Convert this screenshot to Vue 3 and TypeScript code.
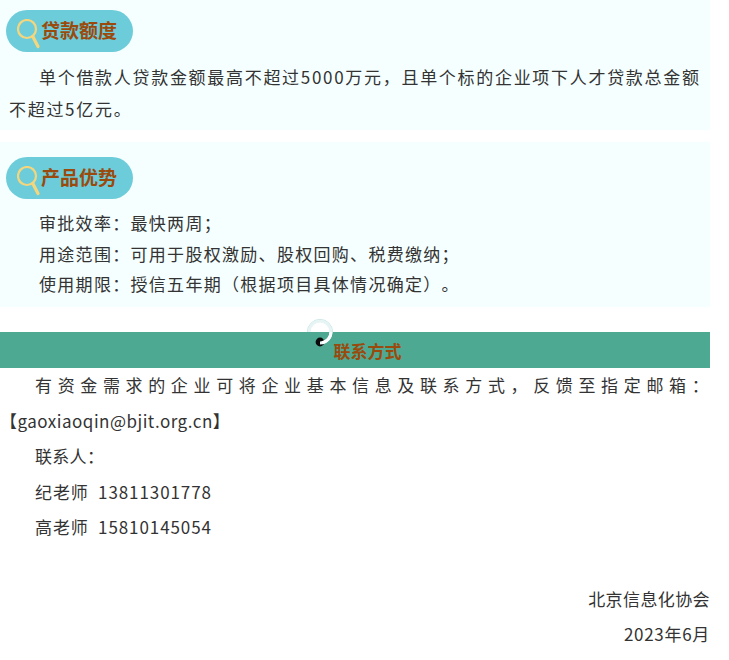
<script setup lang="ts">
interface Section { title: string }
const terms: [string, string][] = [
  ['审批效率：', '最快两周；'],
  ['用途范围：', '可用于股权激励、股权回购、税费缴纳；'],
  ['使用期限：', '授信五年期（根据项目具体情况确定）。'],
]
const contacts: { name: string; phone: string }[] = [
  { name: '纪老师', phone: '13811301778' },
  { name: '高老师', phone: '15810145054' },
]
const first: Section = { title: '贷款额度' }
const second: Section = { title: '产品优势' }
</script>

<template>
  <main class="page">
    <section class="card card-one">
      <h2 class="pill">
        <svg class="lens" viewBox="0 0 26 32" width="26" height="32" aria-hidden="true">
          <circle cx="10" cy="10" r="9" fill="none" stroke="#f5d67c" stroke-width="2.2" />
          <path d="M15.8 17.5 L21 27.5" stroke="#f5d67c" stroke-width="3.2" stroke-linecap="round" />
        </svg>
        <span class="pill-text">{{ first.title }}</span>
      </h2>
      <p class="para">单个借款人贷款金额最高不超过5000万元，且单个标的企业项下人才贷款总金额不超过5亿元。</p>
    </section>

    <section class="card card-two">
      <h2 class="pill">
        <svg class="lens" viewBox="0 0 26 32" width="26" height="32" aria-hidden="true">
          <circle cx="10" cy="10" r="9" fill="none" stroke="#f5d67c" stroke-width="2.2" />
          <path d="M15.8 17.5 L21 27.5" stroke="#f5d67c" stroke-width="3.2" stroke-linecap="round" />
        </svg>
        <span class="pill-text">{{ second.title }}</span>
      </h2>
      <ul class="terms">
        <li v-for="t in terms" :key="t[0]">{{ t[0] }}{{ t[1] }}</li>
      </ul>
    </section>

    <div class="banner">
      <svg class="swirl" viewBox="0 0 30 34" width="30" height="34" aria-hidden="true">
        <circle cx="15" cy="25" r="4.4" fill="#0a0a0a" />
        <path d="M2.5 15 A12.5 12.5 0 0 1 27.5 15" fill="none" stroke="#b9dcdc" stroke-width="1" />
        <path d="M4 15 A11 11 0 1 1 15 26" fill="none" stroke="#e6f4f4" stroke-width="3" />
        <path d="M26 15 A11 11 0 0 1 17 25.8" fill="none" stroke="#ffffff" stroke-width="3" />
      </svg>
      <span class="banner-title">联系方式</span>
    </div>

    <section class="contact">
      <p class="lead">有资金需求的企业可将企业基本信息及联系方式，反馈至指定邮箱：</p>
      <p class="mail">【gaoxiaoqin@bjit.org.cn】</p>
      <p class="indent">联系人：</p>
      <p v-for="c in contacts" :key="c.phone" class="indent phone-row">{{ c.name }}&nbsp;&nbsp;{{ c.phone }}</p>
      <div class="sign">
        <p>北京信息化协会</p>
        <p class="date">2023年6月</p>
      </div>
    </section>
  </main>
</template>

<style scoped>
.page {
  width: 710px;
  font-family: "Noto Sans CJK SC", "Noto Sans", sans-serif;
  font-weight: 400;
  color: #333;
  font-size: 17px;
  text-spacing-trim: space-all;
}
p, h2, ul { margin: 0; padding: 0; }
.card { background: #f5ffff; padding: 10px 0 0 6px; }
.card-one { height: 120px; }
.card-two { margin-top: 12px; height: 150px; padding-top: 15px; }
.pill {
  display: flex;
  align-items: center;
  width: 127px;
  height: 42px;
  border-radius: 21px;
  background: #6dccd9;
  color: #9a4a0c;
  font-size: 19px;
  font-weight: 700;
  box-sizing: border-box;
  padding-left: 11px;
}
.pill-text { padding-bottom: 3px; line-height: 26px; }
.lens { margin-right: -2px; margin-top: 8px; flex: none; }
.para {
  margin: 9px 0 0 3px;
  line-height: 32px;
  letter-spacing: 1.7px;
  text-indent: 30px;
  width: 695px;
}
.terms { list-style: none; margin: 9px 0 0 33px; }
.terms li { line-height: 30.7px; letter-spacing: 1.3px; white-space: nowrap; }
.banner {
  position: relative;
  margin-top: 25px;
  height: 36px;
  background: #4ea992;
  display: flex;
  justify-content: center;
  align-items: flex-end;
}
.swirl { position: absolute; left: 305px; top: -15px; }
.banner-title {
  margin-left: 25px;
  padding-bottom: 6px;
  color: #9a4a0c;
  font-size: 17px;
  font-weight: 700;
  line-height: 22px;
}
.contact { margin-top: -1px; line-height: 35.5px; letter-spacing: 0.3px; }
.lead {
  padding: 0 1px 0 35px;
  text-align: justify;
  text-align-last: justify;
}
.mail { letter-spacing: 0.5px; }
.indent { padding-left: 35px; }
.phone-row { letter-spacing: 0.9px; }
.sign { margin-top: 36px; text-align: right; letter-spacing: 0.4px; }
.date { letter-spacing: 0.7px; }
</style>

<style>
html, body { background: #fff; }
</style>
